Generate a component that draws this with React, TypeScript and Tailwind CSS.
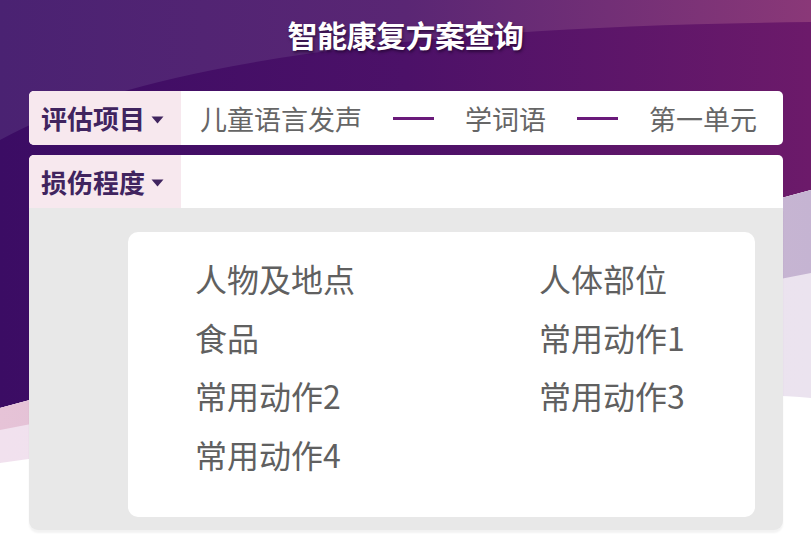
import React from "react";

const font = { fontFamily: '"Noto Sans CJK SC", "Noto Sans", sans-serif' };

function Caret() {
  return (
    <svg width="13" height="8" viewBox="0 0 13 8" className="ml-[6px] mt-[3px]">
      <path d="M0.5 0.5 L12.5 0.5 L6.5 7.5 Z" fill="#40245f" />
    </svg>
  );
}

function Dash() {
  return <div className="w-[41px] h-[3px] bg-[#6a1a7a]" />;
}

export default function App() {
  const items: [string, string][] = [
    ["人物及地点", "人体部位"],
    ["食品", "常用动作1"],
    ["常用动作2", "常用动作3"],
    ["常用动作4", ""],
  ];
  return (
    <div className="relative w-[811px] h-[538px] overflow-hidden bg-white" style={font}>
      <svg className="absolute inset-0" width="811" height="538" viewBox="0 0 811 538">
        <defs>
          <linearGradient id="main" x1="0" y1="0" x2="1" y2="0">
            <stop offset="0" stopColor="#3b0c64" />
            <stop offset="0.5" stopColor="#4c1168" />
            <stop offset="1" stopColor="#6c1a6a" />
          </linearGradient>
          <linearGradient id="top" x1="0" y1="0" x2="1" y2="0">
            <stop offset="0" stopColor="#4a2272" />
            <stop offset="0.5" stopColor="#5a2674" />
            <stop offset="1" stopColor="#8a3878" />
          </linearGradient>
          <linearGradient id="pink" x1="0" y1="0" x2="1" y2="0">
            <stop offset="0" stopColor="#e6c3d7" />
            <stop offset="1" stopColor="#c5b4d2" />
          </linearGradient>
          <linearGradient id="light" x1="0" y1="0" x2="1" y2="0">
            <stop offset="0" stopColor="#f1e1ee" />
            <stop offset="1" stopColor="#ebe3ef" />
          </linearGradient>
        </defs>
        <rect x="0" y="0" width="811" height="538" fill="url(#main)" />
        <path d="M0 0 H811 V22 Q200 28 0 140 Z" fill="url(#top)" />
        <path d="M0 408 L811 190 L811 538 L0 538 Z" fill="#ffffff" />
        <path d="M0 408 L811 190 L811 398 Q600 380 0 463 Z" fill="url(#light)" />
        <path d="M0 408 L811 190 L811 273 L0 430 Z" fill="url(#pink)" />
      </svg>

      <div className="relative flex flex-col">
        <div className="h-[91px] flex justify-center pt-[15px]">
          <h1
            className="text-[30px] leading-[38px] font-bold text-white tracking-[-0.5px]"
            style={{ textShadow: "1px 2px 3px rgba(20,0,30,0.6)" }}
          >
            智能康复方案查询
          </h1>
        </div>

        <div className="mx-[29px] w-[754px] h-[54px] flex rounded-[5px] bg-white overflow-hidden">
          <div className="w-[152px] bg-[#f7e8ee] flex items-center pl-[12px]">
            <span className="text-[26px] font-bold text-[#40245f] leading-none">评估项目</span>
            <Caret />
          </div>
          <div className="flex-1 flex items-center pl-[19px] gap-[31px] text-[27px] text-[#666666] leading-none">
            <span>儿童语言发声</span>
            <Dash />
            <span>学词语</span>
            <Dash />
            <span>第一单元</span>
          </div>
        </div>

        <div className="mx-[29px] mt-[10px] w-[754px] h-[53px] flex rounded-t-[5px] bg-white overflow-hidden">
          <div className="w-[152px] bg-[#f7e8ee] flex items-center pl-[12px]">
            <span className="text-[26px] font-bold text-[#40245f] leading-none">损伤程度</span>
            <Caret />
          </div>
          <div className="flex-1" />
        </div>

        <div className="mx-[29px] w-[754px] h-[322px] bg-[#e8e8e8] rounded-b-[9px] pt-[24px] pl-[99px] pr-[28px] shadow-[0_3px_2px_rgba(0,0,0,0.05)]">
          <div className="h-[285px] bg-white rounded-[10px] pt-[17px] pl-[67px]">
            <div className="grid grid-cols-[344px_1fr] text-[32px] leading-[58.7px] text-[#606060]">
              {items.map(([a, b], i) => (
                <React.Fragment key={i}>
                  <div>{a}</div>
                  <div>{b}</div>
                </React.Fragment>
              ))}
            </div>
          </div>
        </div>
      </div>
    </div>
  );
}
